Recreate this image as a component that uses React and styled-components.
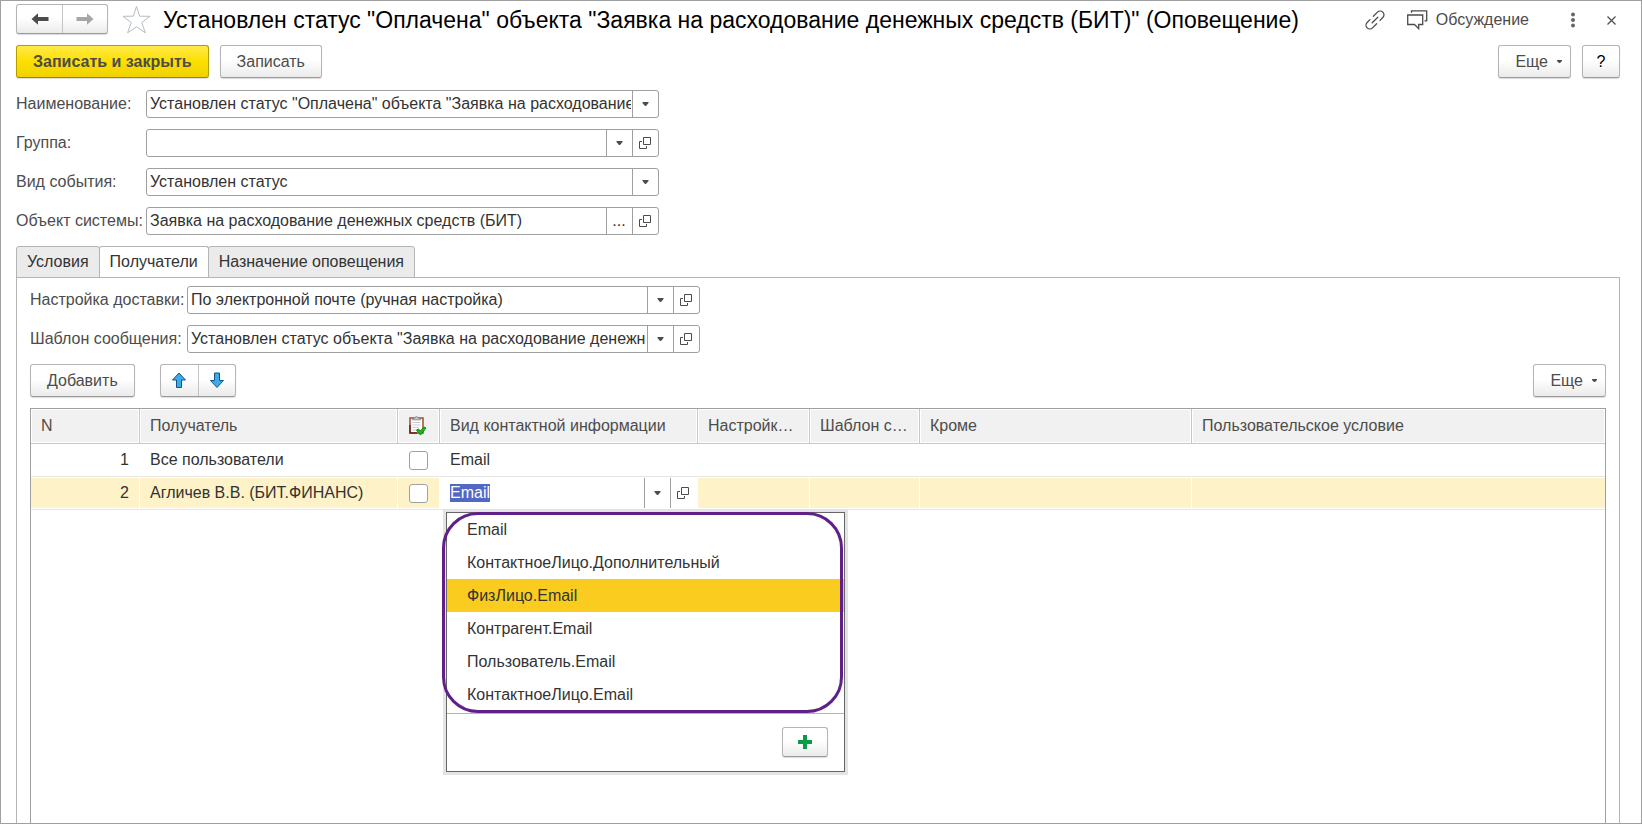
import React, { useEffect, useRef } from "react";
import styled, { createGlobalStyle, css } from "styled-components";

const GlobalStyle = createGlobalStyle`
  *, *::before, *::after { box-sizing: border-box; }
  body {
    margin: 0;
    background: #fff;
    color: #333;
    font: 16px/18px "Liberation Sans", Arial, sans-serif;
  }
  button, input { font: inherit; color: inherit; margin: 0; }
  button { cursor: pointer; }
  svg { display: block; flex: none; }
`;

const Frame = styled.div`
  min-height: 100vh;
  display: flex;
  flex-direction: column;
  gap: 11px;
  padding: 3px 21px 0 15px;
  border: 1px solid #a0a0a0;
`;

const TitleBar = styled.header`
  display: flex;
  align-items: center;
  height: 30px;
`;

const Title = styled.h1`
  flex: 1;
  min-width: 0;
  margin: 0 0 0 12px;
  padding-top: 2px;
  overflow: hidden;
  white-space: nowrap;
  text-overflow: ellipsis;
  font-size: 23px;
  line-height: 28px;
  font-weight: 400;
  color: #000;
`;

const buttonFace = css`
  border: 1px solid #b4b4b4;
  border-bottom-color: #9a9a9a;
  background: linear-gradient(#fff 0%, #fff 45%, #ebebeb 100%);
  box-shadow: 0 1px 1px rgba(0, 0, 0, 0.14);
  color: #4c4c4c;
`;

const Button = styled.button`
  ${buttonFace}
  display: flex;
  align-items: center;
  justify-content: center;
  gap: 9px;
  height: 33px;
  padding: 0 ${(p) => (p.$menu ? "8px 0 16px" : "16px")};
  border-radius: 3px;
  white-space: nowrap;
  ${(p) =>
    p.$primary &&
    css`
      border-color: #b39e00;
      border-bottom-color: #998700;
      background: linear-gradient(#ffea47 0%, #fddf00 50%, #efd200 100%);
      font-weight: 700;
    `}
`;

const HelpButton = styled(Button)`
  width: 38px;
  padding: 0;
  color: #000;
`;

const ButtonGroup = styled.div`
  ${buttonFace}
  display: flex;
  height: ${(p) => p.$height};
  border-radius: 3px;
`;

const GroupButton = styled.button`
  display: flex;
  align-items: center;
  justify-content: center;
  width: ${(p) => p.$width};
  padding: 0;
  border: 0;
  background: none;
  & + & { border-left: 1px solid #c4c4c4; }
`;

const IconButton = styled.button`
  display: flex;
  align-items: center;
  padding: 0;
  border: 0;
  background: none;
  color: #4c4c4c;
`;

const StarButton = styled(IconButton)`
  margin-left: 13px;
`;

const TitleTools = styled.div`
  display: flex;
  align-items: center;
  padding: 2px 4px 0 0;
`;

const DiscussButton = styled(IconButton)`
  gap: 8px;
  margin: 0 42px 0 22px;
`;

const CloseButton = styled(IconButton)`
  margin-left: 32px;
`;

const Toolbar = styled.div`
  display: flex;
  align-items: center;
  gap: 11px;
`;

const Spacer = styled.div`
  flex: 1;
`;

const FieldList = styled.div`
  display: flex;
  flex-direction: column;
  gap: 11px;
  padding-top: 1px;
`;

const FieldRow = styled.div`
  display: flex;
  align-items: center;
`;

const FieldLabel = styled.label`
  flex: none;
  width: ${(p) => p.$width};
  white-space: nowrap;
  color: #4c4c4c;
`;

const FieldBox = styled.div`
  display: flex;
  width: 513px;
  height: 28px;
  border: 1px solid #a0a0a0;
  border-radius: 3px;
  background: #fff;
`;

const FieldInput = styled.input`
  flex: 1;
  min-width: 0;
  padding: 0 1px 0 3px;
  border: 0;
  outline: 0;
  background: none;
`;

const FieldButton = styled.button`
  display: flex;
  align-items: center;
  justify-content: center;
  width: 26px;
  padding: 0 1px 0 0;
  border: 0;
  border-left: 1px solid #a0a0a0;
  background: none;
`;

const TabArea = styled.section`
  flex: 1;
  display: flex;
  flex-direction: column;
`;

const TabList = styled.div`
  display: flex;
  padding-left: 1px;
`;

const Tab = styled.button`
  height: 32px;
  margin: 0 0 -1px -1px;
  padding: 0 10px 1px;
  border: 1px solid #b4b4b4;
  border-bottom-color: ${(p) => (p.$active ? "#fff" : "#b4b4b4")};
  border-radius: 3px 3px 0 0;
  background: ${(p) => (p.$active ? "#fff" : "#ebebeb")};
`;

const TabPanel = styled.div`
  flex: 1;
  display: flex;
  flex-direction: column;
  gap: 11px;
  padding: 7px 13px 0;
  border: 1px solid #b4b4b4;
  border-bottom: 0;
`;

const MoveButtons = styled.div`
  margin-left: 14px;
`;

const TableArea = styled.div`
  flex: 1;
  border: 1px solid #a0a0a0;
  border-bottom: 0;
`;

const Table = styled.table`
  width: 100%;
  table-layout: fixed;
  border-collapse: separate;
  border-spacing: 0;
`;

const Col = styled.col`
  width: ${(p) => p.$width || "auto"};
`;

const HeadCell = styled.th`
  height: 35px;
  padding: 0 9px 0 10px;
  white-space: nowrap;
  text-align: left;
  font-weight: 400;
  color: #4c4c4c;
  background: #f1f1f1;
  box-shadow: inset 0 0 0 1px #fff;
  border-right: 1px solid #c8c8c8;
  border-bottom: 1px solid #c8c8c8;
  &:last-child { border-right: 0; }
`;

const Cell = styled.td`
  position: relative;
  height: 33px;
  padding: 0 10px;
  text-align: ${(p) => (p.$number ? "right" : "left")};
  white-space: nowrap;
  border-right: 1px solid #fff;
  border-bottom: 1px solid #e4e4e4;
  &:last-child { border-right: 0; }
  ${(p) =>
    p.$selected &&
    css`
      background: #fdf2c8;
      box-shadow: inset 0 1px #fff, inset 0 -1px #fff;
    `}
`;

const EditCell = styled(Cell)`
  padding: 0;
`;

const CheckBox = styled.input`
  appearance: none;
  display: block;
  width: 19px;
  height: 19px;
  margin: 0 0 0 1px;
  border: 1px solid #a0a0a0;
  border-radius: 3px;
  background: #fff;
`;

const CellEditor = styled.div`
  display: flex;
  height: 30px;
  padding-right: 1px;
`;

const CellInput = styled(FieldInput)`
  padding-left: 10px;
  caret-color: transparent;
  &::selection { background: #5168c4; color: #fff; }
`;

const Popup = styled.div`
  position: absolute;
  z-index: 1;
  top: 35px;
  left: 6px;
  width: 399px;
  border: 1px solid #666;
  background: #fff;
  box-shadow: 0 0 0 3px #e4e4e4;
`;

const OptionList = styled.ul`
  margin: 0;
  padding: 0 0 2px;
  list-style: none;
  border-bottom: 1px solid #b4b4b4;
`;

const Option = styled.li`
  height: 33px;
  padding: 0 20px;
  line-height: 33px;
  background: ${(p) => (p.$active ? "#facc20" : "transparent")};
`;

const PopupFooter = styled.div`
  display: flex;
  justify-content: flex-end;
  padding: 13px 16px 14px;
`;

const AddButton = styled(Button)`
  width: 46px;
  height: 30px;
  padding: 0;
`;

const Highlight = styled.div`
  position: absolute;
  top: -1px;
  left: -5px;
  width: 401px;
  height: 201px;
  border: 3px solid #5f2088;
  border-radius: 36px;
  pointer-events: none;
`;

const Caret = () => (
  <svg width="7" height="4" viewBox="0 0 7 4" aria-hidden="true">
    <path d="M.5 0h6v1L4 4H3L.5 1z" fill="#4c4c4c" />
  </svg>
);

const SmallCaret = () => (
  <svg width="5" height="3" viewBox="0 0 5 3" aria-hidden="true">
    <path d="M0 0h5v1L3 3H2L0 1z" fill="#4c4c4c" />
  </svg>
);

const OpenIcon = () => (
  <svg width="12" height="12" viewBox="0 0 12 12" fill="none" stroke="#4c4c4c" aria-hidden="true">
    <path d="M4.500.5h7v7h-7zM3 4.500H.5v7h7V9" />
  </svg>
);

const BackIcon = ({ color, flip }) => (
  <svg width="18" height="12" viewBox="0 0 18 12" aria-hidden="true">
    <path
      d={flip ? "M17.500 6 11 .3V4H.5v4H11v3.700z" : "M.5 6 7 .3V4h10.500v4H7v3.700z"}
      fill={color}
    />
  </svg>
);

const StarIcon = () => (
  <svg width="30" height="30" viewBox="0 0 30 30" fill="none" stroke="#b7bcc4" aria-hidden="true">
    <path d="M15.500 2.500l3.200 9.700 10.300.1-8.300 6.300 3.700 10.200-8.900-6-8.900 6 3.700-10.200L2 12.300l10.300-.1z" />
  </svg>
);

const LinkIcon = () => (
  <svg width="20" height="20" viewBox="0 0 20 20" fill="none" stroke="#4c4c4c" strokeWidth="1.300" strokeLinecap="round" aria-hidden="true">
    <path
      transform="rotate(-45 10 10)"
      d="M11.500 6.200h5.800a3.800 3.800 0 0 1 0 7.600h-4M8.500 13.800H2.700a3.800 3.800 0 0 1 0-7.600h4M6 10h8"
    />
  </svg>
);

const ChatIcon = () => (
  <svg width="21" height="20" viewBox="0 0 21 20" fill="none" stroke="#4c4c4c" strokeWidth="1.300" aria-hidden="true">
    <path d="M.7 5h15v9.500h-4v4.200l-4.200-4.200H.7zM4.500 2.800V.8h15.200v10h-2.200" />
  </svg>
);

const DotsIcon = () => (
  <svg width="4" height="16" viewBox="0 0 4 16" fill="#666" aria-hidden="true">
    <circle cx="2" cy="2.500" r="2" />
    <circle cx="2" cy="8" r="2" />
    <circle cx="2" cy="13.500" r="2" />
  </svg>
);

const CloseIcon = () => (
  <svg width="9" height="9" viewBox="0 0 9 9" stroke="#4c4c4c" strokeWidth="1.200" aria-hidden="true">
    <path d="M.5.5l8 8M8.500.5l-8 8" />
  </svg>
);

const MoveIcon = ({ down }) => (
  <svg width="16" height="17" viewBox="0 0 16 17" fill="#3fa9ee" stroke="#0d5787" aria-hidden="true">
    <path
      strokeLinejoin="round"
      d={
        down
          ? "M5.500 1h5v7.500h4L8 15.500l-6.500-7h4z"
          : "M8 1l6.500 7h-4v7.500h-5V8h-4z"
      }
    />
  </svg>
);

const ClipboardIcon = () => (
  <svg width="19" height="20" viewBox="-1 0 19 20" fill="none" aria-hidden="true">
    <path d="M1 2h13v15H1z" fill="#fff" stroke="#a04d28" strokeWidth="1.500" />
    <path d="M1 9v8h7" stroke="#6b2222" strokeWidth="1.500" />
    <path d="M3.500 3.800V2.200h2C5.800.3 9.200.3 9.500 2.200h2v1.600z" fill="#ccc" stroke="#777" strokeWidth=".8" />
    <path d="M3.500 6.500h8M3.500 9h8M3.500 11.500h6M3.500 14h4" stroke="#c3cad4" />
    <path d="M7.500 14l2-1 1.700 2 4-4 1.800 1-5.500 7z" fill="#16c116" stroke="#087808" strokeWidth=".9" strokeLinejoin="round" />
  </svg>
);

const PlusIcon = () => (
  <svg width="14" height="14" viewBox="0 0 14 14" aria-hidden="true">
    <path d="M5 0h4v5h5v4H9v5H5V9H0V5h5z" fill="#099a4a" />
  </svg>
);

function Field({ id, label, labelWidth, value, choose, pick, open }) {
  return (
    <FieldRow>
      <FieldLabel htmlFor={id} $width={labelWidth}>{label}</FieldLabel>
      <FieldBox>
        <FieldInput id={id} defaultValue={value} />
        {choose && <FieldButton aria-label="Выбрать из списка"><Caret /></FieldButton>}
        {pick && <FieldButton aria-label="Выбрать">...</FieldButton>}
        {open && <FieldButton aria-label="Открыть"><OpenIcon /></FieldButton>}
      </FieldBox>
    </FieldRow>
  );
}

const MoreButton = () => (
  <Button $menu>
    Еще
    <SmallCaret />
  </Button>
);

const OPTIONS = [
  "Email",
  "КонтактноеЛицо.Дополнительный",
  "ФизЛицо.Email",
  "Контрагент.Email",
  "Пользователь.Email",
  "КонтактноеЛицо.Email",
];
const ACTIVE_OPTION = "ФизЛицо.Email";

function ContactEditor() {
  const input = useRef(null);
  useEffect(() => {
    input.current.focus();
    input.current.select();
  }, []);
  return (
    <>
      <CellEditor>
        <CellInput ref={input} aria-label="Вид контактной информации" defaultValue="Email" />
        <FieldButton aria-label="Выбрать из списка"><Caret /></FieldButton>
        <FieldButton aria-label="Открыть"><OpenIcon /></FieldButton>
      </CellEditor>
      <Popup>
        <OptionList role="listbox" aria-label="Вид контактной информации">
          {OPTIONS.map((name) => (
            <Option key={name} role="option" aria-selected={name === ACTIVE_OPTION} $active={name === ACTIVE_OPTION}>
              {name}
            </Option>
          ))}
        </OptionList>
        <PopupFooter>
          <AddButton aria-label="Создать"><PlusIcon /></AddButton>
        </PopupFooter>
        <Highlight />
      </Popup>
    </>
  );
}

const COLUMN_WIDTHS = ["109px", "258px", "42px", "258px", "112px", "110px", "272px", null];

export default function App() {
  return (
    <>
      <GlobalStyle />
      <Frame>
        <TitleBar>
          <ButtonGroup $height="30px">
            <GroupButton $width="45px" aria-label="Назад"><BackIcon color="#4c4c4c" /></GroupButton>
            <GroupButton $width="45px" aria-label="Вперед"><BackIcon color="#a6a6a6" flip /></GroupButton>
          </ButtonGroup>
          <StarButton aria-label="В избранное"><StarIcon /></StarButton>
          <Title>Установлен статус "Оплачена" объекта "Заявка на расходование денежных средств (БИТ)" (Оповещение)</Title>
          <TitleTools>
            <IconButton aria-label="Ссылка"><LinkIcon /></IconButton>
            <DiscussButton><ChatIcon />Обсуждение</DiscussButton>
            <IconButton aria-label="Меню"><DotsIcon /></IconButton>
            <CloseButton aria-label="Закрыть"><CloseIcon /></CloseButton>
          </TitleTools>
        </TitleBar>

        <Toolbar>
          <Button $primary>Записать и закрыть</Button>
          <Button>Записать</Button>
          <Spacer />
          <MoreButton />
          <HelpButton>?</HelpButton>
        </Toolbar>

        <FieldList>
          <Field id="name" label="Наименование:" labelWidth="130px" choose
            value={'Установлен статус "Оплачена" объекта "Заявка на расходование денежных средств (БИТ)"'} />
          <Field id="group" label="Группа:" labelWidth="130px" choose open value="" />
          <Field id="event" label="Вид события:" labelWidth="130px" choose value="Установлен статус" />
          <Field id="object" label="Объект системы:" labelWidth="130px" pick open
            value="Заявка на расходование денежных средств (БИТ)" />
        </FieldList>

        <TabArea>
          <TabList role="tablist">
            <Tab role="tab" aria-selected={false}>Условия</Tab>
            <Tab role="tab" aria-selected $active>Получатели</Tab>
            <Tab role="tab" aria-selected={false}>Назначение оповещения</Tab>
          </TabList>
          <TabPanel role="tabpanel">
            <FieldList>
              <Field id="delivery" label="Настройка доставки:" labelWidth="157px" choose open
                value="По электронной почте (ручная настройка)" />
              <Field id="template" label="Шаблон сообщения:" labelWidth="157px" choose open
                value={'Установлен статус объекта "Заявка на расходование денежных средств (БИТ)"'} />
            </FieldList>
            <Toolbar>
              <Button>Добавить</Button>
              <MoveButtons>
                <ButtonGroup $height="33px">
                  <GroupButton $width="37px" aria-label="Переместить вверх"><MoveIcon /></GroupButton>
                  <GroupButton $width="37px" aria-label="Переместить вниз"><MoveIcon down /></GroupButton>
                </ButtonGroup>
              </MoveButtons>
              <Spacer />
              <MoreButton />
            </Toolbar>
            <TableArea>
              <Table>
                <colgroup>
                  {COLUMN_WIDTHS.map((width, i) => <Col key={i} $width={width} />)}
                </colgroup>
                <thead>
                  <tr>
                    <HeadCell>N</HeadCell>
                    <HeadCell>Получатель</HeadCell>
                    <HeadCell aria-label="Использование"><ClipboardIcon /></HeadCell>
                    <HeadCell>Вид контактной информации</HeadCell>
                    <HeadCell>Настройк…</HeadCell>
                    <HeadCell>Шаблон с…</HeadCell>
                    <HeadCell>Кроме</HeadCell>
                    <HeadCell>Пользовательское условие</HeadCell>
                  </tr>
                </thead>
                <tbody>
                  <tr>
                    <Cell $number>1</Cell>
                    <Cell>Все пользователи</Cell>
                    <Cell><CheckBox type="checkbox" aria-label="Все пользователи" /></Cell>
                    <Cell>Email</Cell>
                    <Cell /><Cell /><Cell /><Cell />
                  </tr>
                  <tr>
                    <Cell $number $selected>2</Cell>
                    <Cell $selected>Агличев В.В. (БИТ.ФИНАНС)</Cell>
                    <Cell $selected><CheckBox type="checkbox" aria-label="Агличев В.В. (БИТ.ФИНАНС)" /></Cell>
                    <EditCell><ContactEditor /></EditCell>
                    <Cell $selected /><Cell $selected /><Cell $selected /><Cell $selected />
                  </tr>
                </tbody>
              </Table>
            </TableArea>
          </TabPanel>
        </TabArea>
      </Frame>
    </>
  );
}
